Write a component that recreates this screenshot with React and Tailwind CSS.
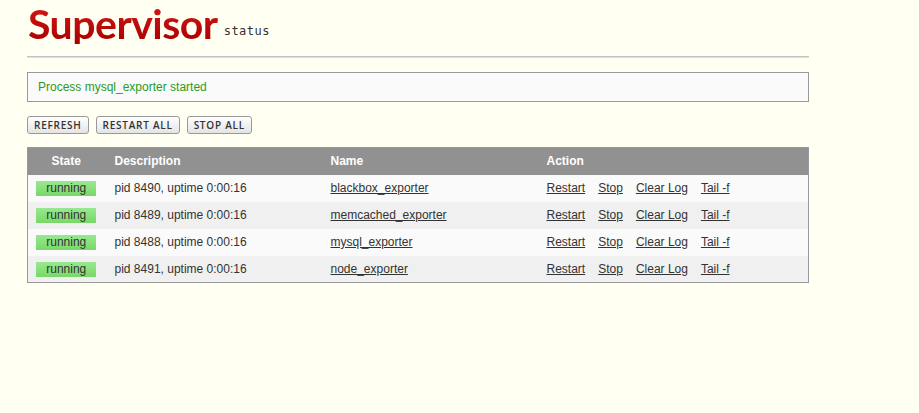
import React from "react";

const processes = [
  { pid: 8490, name: "blackbox_exporter" },
  { pid: 8489, name: "memcached_exporter" },
  { pid: 8488, name: "mysql_exporter" },
  { pid: 8491, name: "node_exporter" },
];

const actions = ["Restart", "Stop", "Clear Log", "Tail -f"];

export default function App() {
  return (
    <div
      className="min-h-[413px] w-full bg-[#fffff2] text-[#333]"
      style={{ fontFamily: '"Liberation Sans", Arial, sans-serif' }}
    >
      <div className="w-[782px] ml-[27px]">
        {/* header */}
        <div className="flex items-end h-[44px] pl-[1px]">
          <span
            className="text-[41px] leading-[41px] font-bold tracking-[-0.5px] bg-gradient-to-b from-[#d41818] to-[#a80000] bg-clip-text text-transparent"
            style={{ fontFamily: 'Lato, "Open Sans", sans-serif' }}
          >
            Supervisor
          </span>
          <span
            className="ml-[6px] mb-[7px] text-[12px] leading-none text-[#333] tracking-[0.5px]"
            style={{ fontFamily: '"DejaVu Sans Mono", monospace' }}
          >
            status
          </span>
        </div>
        <div className="mt-[12px] h-[2px] bg-[#c4c4c4] border-b border-[#dedede]" />

        {/* status message */}
        <div className="mt-[14px] h-[30px] border border-[#999] bg-[#fafafa] px-[10px] flex items-center text-[12px] text-[#2a9a1e]">
          Process mysql_exporter started
        </div>

        {/* buttons */}
        <div className="mt-[14px] flex gap-[7px]">
          {["Refresh", "Restart All", "Stop All"].map((b) => (
            <button
              key={b}
              className="h-[18px] px-[6px] rounded-[3px] border border-[#999] bg-gradient-to-b from-[#ffffff] to-[#e4e4e4] text-[10px] leading-none font-semibold uppercase tracking-[0.75px] text-[#333]"
              style={{ fontFamily: '"Open Sans", sans-serif' }}
            >
              {b}
            </button>
          ))}
        </div>

        {/* table */}
        <table className="mt-[13px] w-full border border-[#999] border-collapse text-[12px] table-fixed">
          <colgroup>
            <col className="w-[77px]" />
            <col className="w-[216px]" />
            <col className="w-[216px]" />
            <col />
          </colgroup>
          <thead>
            <tr className="h-[27px] bg-[#919191] text-white font-bold">
              <th className="text-center">State</th>
              <th className="text-left pl-[10px]">Description</th>
              <th className="text-left pl-[10px]">Name</th>
              <th className="text-left pl-[10px]">Action</th>
            </tr>
          </thead>
          <tbody>
            {processes.map((p, i) => (
              <tr
                key={p.name}
                className={`h-[27px] ${i % 2 === 0 ? "bg-[#fafafa]" : "bg-[#f0f0f0]"}`}
              >
                <td className="text-center">
                  <span className="inline-block w-[60px] h-[15px] leading-[14px] bg-gradient-to-b from-[#98e890] to-[#78d868] text-[#333]">
                    running
                  </span>
                </td>
                <td className="pl-[10px]">pid {p.pid}, uptime 0:00:16</td>
                <td className="pl-[10px]">
                  <a className="underline">{p.name}</a>
                </td>
                <td className="pl-[10px]">
                  <div className="flex gap-[13px]">
                    {actions.map((a) => (
                      <a key={a} className="underline">
                        {a}
                      </a>
                    ))}
                  </div>
                </td>
              </tr>
            ))}
          </tbody>
        </table>
      </div>
    </div>
  );
}
